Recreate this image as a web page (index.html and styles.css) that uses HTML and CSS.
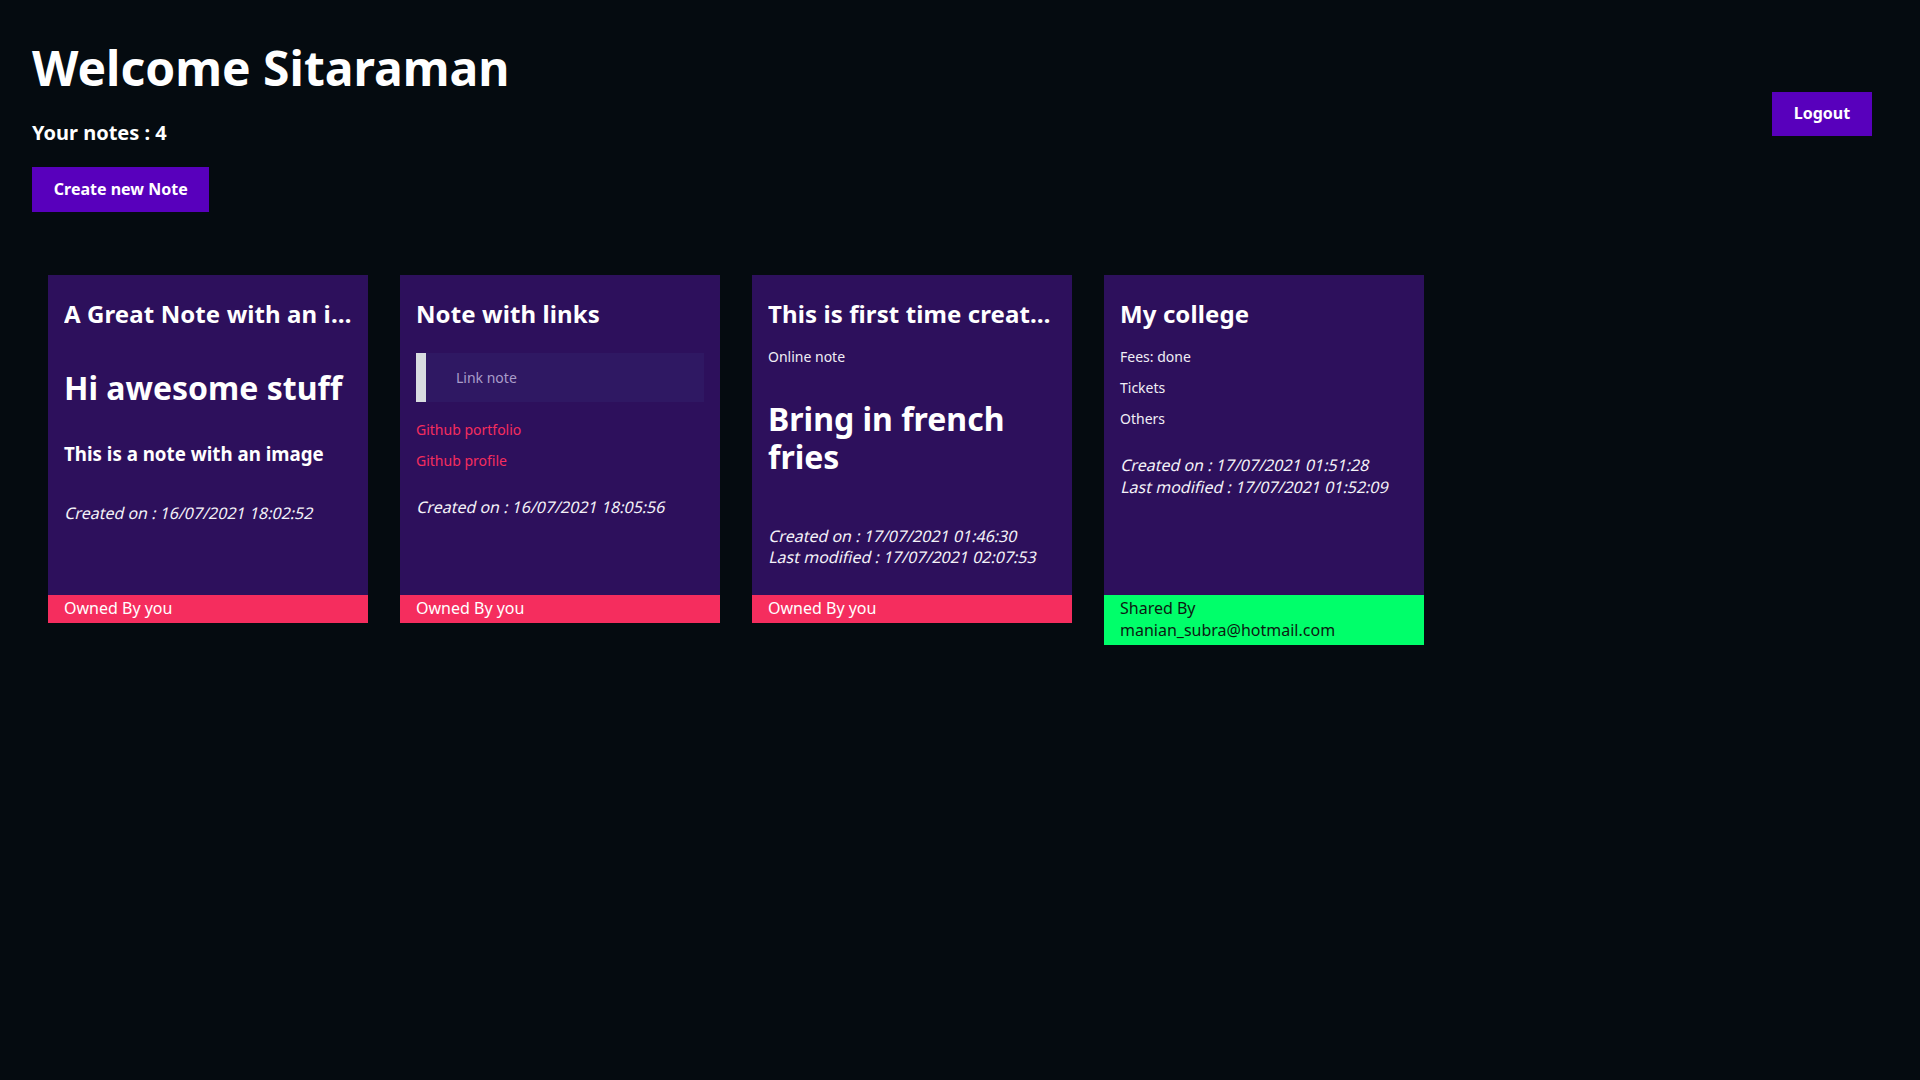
FILE: index.html
```html
<!DOCTYPE html>
<html lang="en">
<head>
<meta charset="utf-8">
<title>Notes</title>
<link rel="stylesheet" href="styles.css">
</head>
<body>
<header class="header">
  <div class="intro">
    <h1 class="welcome">Welcome Sitaraman</h1>
    <h3 class="count">Your notes : 4</h3>
    <button class="btn">Create new Note</button>
  </div>
  <button class="btn">Logout</button>
</header>

<main class="notes">
  <article class="card">
    <div class="card-body">
      <h2 class="title">A Great Note with an image attached to it</h2>
      <div class="content">
        <h1>Hi awesome stuff</h1>
        <h3>This is a note with an image</h3>
      </div>
      <div class="dates">
        <span class="slant">Created on : 16/07/2021 18:02:52</span>
      </div>
    </div>
    <div class="owner owned">Owned By you</div>
  </article>

  <article class="card">
    <div class="card-body">
      <h2 class="title">Note with links</h2>
      <div class="content">
        <blockquote>Link note</blockquote>
        <p><a href="#">Github portfolio</a></p>
        <p><a href="#">Github profile</a></p>
      </div>
      <div class="dates">
        <span class="slant">Created on : 16/07/2021 18:05:56</span>
      </div>
    </div>
    <div class="owner owned">Owned By you</div>
  </article>

  <article class="card">
    <div class="card-body">
      <h2 class="title">This is first time creating a note online</h2>
      <div class="content">
        <p>Online note</p>
        <h1>Bring in french fries</h1>
      </div>
      <div class="dates">
        <span class="slant">Created on : 17/07/2021 01:46:30</span>
        <span class="slant">Last modified : 17/07/2021 02:07:53</span>
      </div>
    </div>
    <div class="owner owned">Owned By you</div>
  </article>

  <article class="card">
    <div class="card-body">
      <h2 class="title">My college</h2>
      <div class="content">
        <p>Fees: done</p>
        <p>Tickets</p>
        <p>Others</p>
      </div>
      <div class="dates">
        <span class="slant">Created on : 17/07/2021 01:51:28</span>
        <span class="slant">Last modified : 17/07/2021 01:52:09</span>
      </div>
    </div>
    <div class="owner shared">Shared By<br>manian_subra@hotmail.com</div>
  </article>
</main>
</body>
</html>
```

FILE: styles.css
```css
* {
  box-sizing: border-box;
}

html, body {
  margin: 0;
  padding: 0;
  background: #050b10;
  color: #ffffff;
  font-family: "Noto Sans", "Open Sans", sans-serif;
  font-size: 16px;
  min-height: 100vh;
}

.header {
  display: flex;
  justify-content: space-between;
  align-items: center;
  padding: 16px 48px 0 32px;
}

.intro {
  display: flex;
  flex-direction: column;
  align-items: flex-start;
}

.welcome {
  font-size: 48px;
  font-weight: 700;
  line-height: 1.2;
  margin: 22.8px 0 25px;
}

.count {
  font-size: 20px;
  font-weight: 700;
  line-height: 1.2;
  margin: 0 0 22px;
}

.btn {
  background: #5800bc;
  color: #ffffff;
  border: none;
  font-family: inherit;
  font-size: 16px;
  font-weight: 700;
  line-height: 1.362;
  padding: 11.4px 21.8px;
  cursor: pointer;
}

.notes {
  display: flex;
  flex-wrap: wrap;
  align-items: flex-start;
  gap: 32px;
  padding: 0 16px 0 48px;
  margin-top: 63px;
}

.card {
  width: 320px;
  display: flex;
  flex-direction: column;
}

.card-body {
  height: 320px;
  background: #2d105c;
  padding: 25px 16px 16px;
  display: flex;
  flex-direction: column;
}

.title {
  font-size: 24px;
  font-weight: 700;
  line-height: 1.2;
  letter-spacing: 0.1px;
  margin: 0 0 6px;
  white-space: nowrap;
  overflow: hidden;
  text-overflow: ellipsis;
}

.content {
  display: flow-root;
}

.content p {
  font-size: 14px;
  line-height: 1.362;
  margin: 12px 0;
  color: #f0eef5;
}

.content h1 {
  font-size: 32px;
  font-weight: 700;
  line-height: 1.2;
  margin: 34px 0 34.3px;
}

.content h3 {
  font-size: 18.72px;
  font-weight: 700;
  line-height: 1.2;
  margin: 36px 0 23px;
}

.content blockquote {
  margin: 18px 0;
  padding: 15px 16px 15px 30px;
  border-left: 10px solid #d8dce0;
  background: #2f1863;
  color: #a99dc9;
  font-size: 14px;
  line-height: 1.362;
}

.content a {
  color: #f52d5e;
  text-decoration: none;
}

.dates {
  margin-top: 14.8px;
  font-size: 16px;
  line-height: 1.362;
  display: flex;
  flex-direction: column;
  align-items: flex-start;
}

.slant {
  display: inline-block;
  transform: skewX(-13deg);
  transform-origin: 0 78%;
  color: #f4f2f8;
}

.owner {
  padding: 3.2px 16px;
  font-size: 16px;
  line-height: 1.362;
}

.owned {
  background: #f52d5e;
  color: #ffffff;
}

.shared {
  background: #00ff6a;
  color: #0c1a12;
}
```
